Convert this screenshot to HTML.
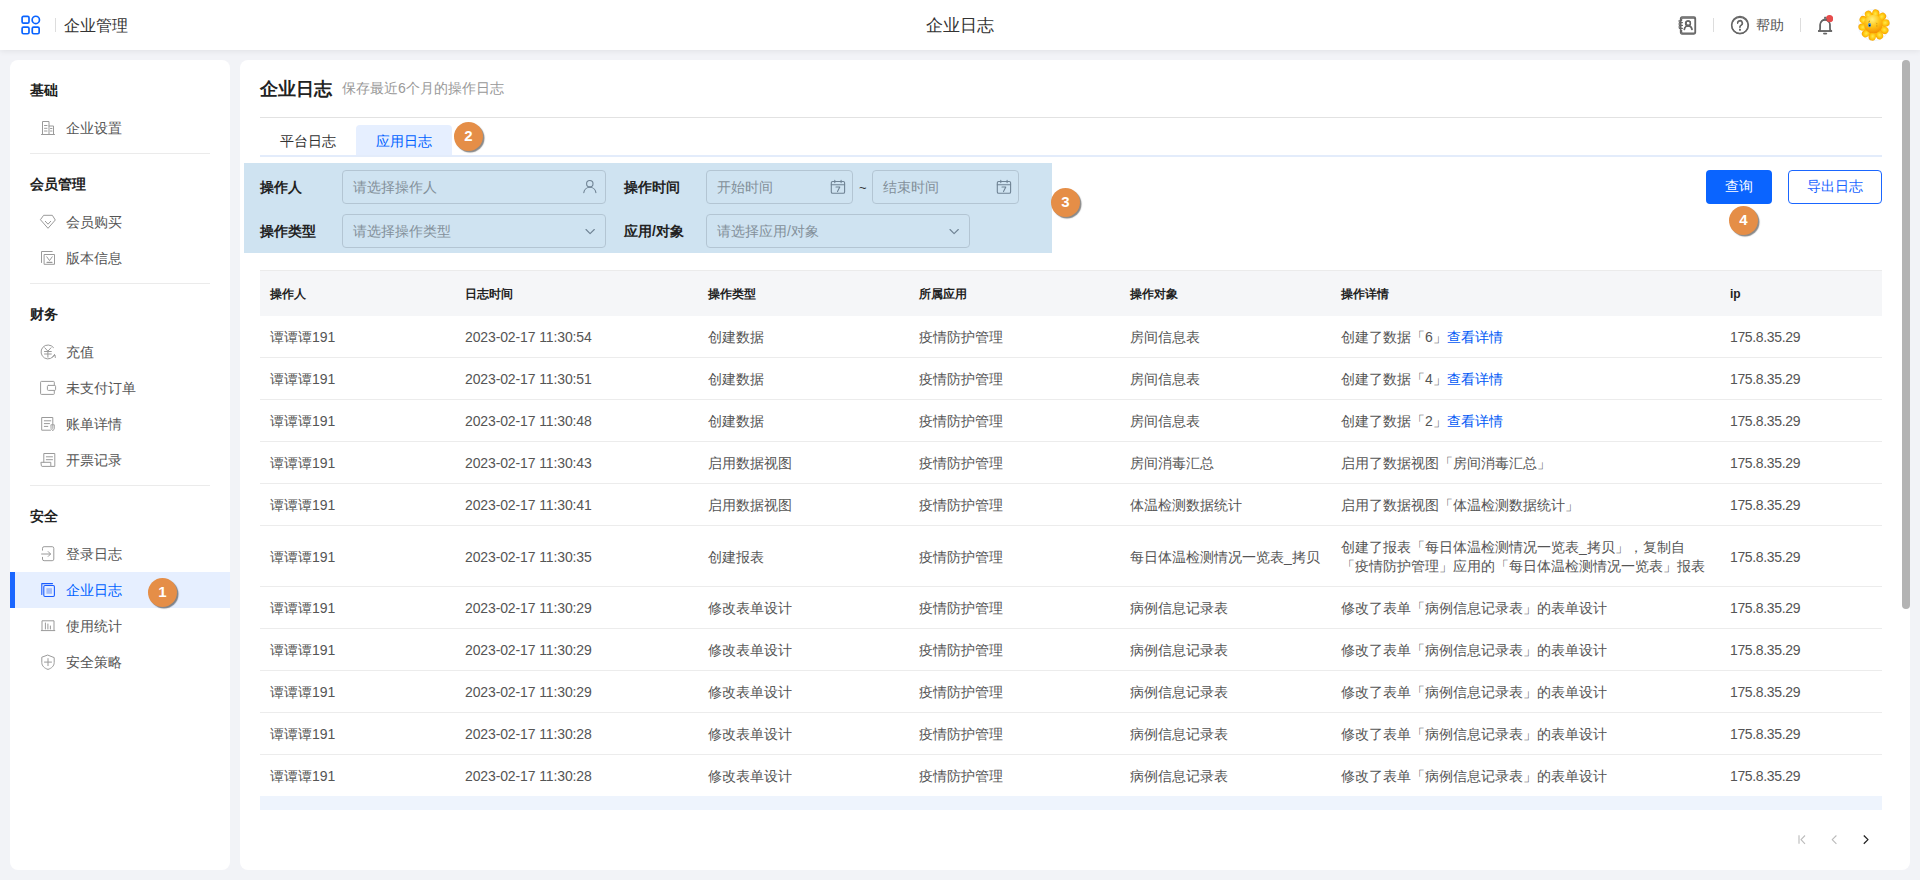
<!DOCTYPE html>
<html><head><meta charset="utf-8">
<style>
*{box-sizing:border-box;margin:0;padding:0}
html,body{width:1920px;height:880px;overflow:hidden;background:#f2f3f7;font-family:"Liberation Sans",sans-serif;color:#333}
.abs{position:absolute}
#hdr{position:absolute;left:0;top:0;width:1920px;height:50px;background:#fff;box-shadow:0 1px 6px rgba(0,0,0,0.08);z-index:2}
#side{position:absolute;left:10px;top:60px;width:220px;height:810px;background:#fff;border-radius:8px}
#main{position:absolute;left:240px;top:60px;width:1670px;height:810px;background:#fff;border-radius:8px;overflow:hidden}
.t{position:absolute;white-space:nowrap;line-height:1}
.grp{position:absolute;left:20px;font-size:14px;font-weight:bold;color:#222;line-height:20px;padding-top:1px}
.item{position:absolute;left:0;width:220px;height:36px;line-height:36px;font-size:14px;color:#555}
.item .lbl{position:absolute;left:56px;top:1px}
.item svg{position:absolute;left:31px;top:11px}
.div{position:absolute;left:20px;width:180px;height:1px;background:#ebebeb}
.badge{position:absolute;width:29px;height:29px;border-radius:50%;background:#e58e47;color:#fff;font-weight:bold;font-size:15px;line-height:28px;text-align:center;box-shadow:1.5px 1.5px 1px rgba(40,40,40,0.55)}
.lab{position:absolute;font-size:14px;font-weight:bold;color:#222;line-height:20px}
.inp{position:absolute;height:34px;border:1px solid #b3c5d3;border-radius:4px;font-size:14px;color:#83909a;line-height:32px;padding-left:10px}
.th{position:absolute;top:0;line-height:48px;font-size:12px;font-weight:bold;color:#222}
.row{position:absolute;left:20px;width:1622px;border-bottom:1px solid #ececec;font-size:14px;color:#555}
.row span{position:absolute;white-space:nowrap;top:0;bottom:0;display:flex;align-items:center;line-height:19px;padding-top:1px}
.row.tall span{padding-top:2px}
a{color:#0058f5;text-decoration:none}
</style></head><body>
<div id="hdr">
  <svg class="abs" style="left:21px;top:15px" width="20" height="20" viewBox="0 0 20 20" fill="none" stroke="#0a64ff" stroke-width="1.7">
    <rect x="1.1" y="1.45" width="6.9" height="6.7" rx="1.4"/><circle cx="14.8" cy="4.9" r="3.65"/><rect x="1.1" y="12.05" width="6.9" height="6.7" rx="1.4"/><rect x="11.25" y="12.05" width="6.9" height="6.7" rx="1.4"/>
  </svg>
  <div class="abs" style="left:55px;top:18px;width:1px;height:14px;background:#ddd"></div>
  <div class="t" style="left:64px;top:18px;font-size:16px;color:#333">企业管理</div>
  <div class="t" style="left:926px;top:17px;font-size:17px;color:#333">企业日志</div>
  <svg class="abs" style="left:1678px;top:16px" width="19" height="19" viewBox="0 0 19 19" fill="none" stroke="#666" stroke-width="1.3">
    <rect x="2.5" y="1" width="15" height="17" rx="1.5"/><circle cx="10" cy="7.5" r="2.5"/><path d="M6 14c0.5-2.5 2-4 4-4s3.5 1.5 4 4"/><path d="M0.5 5h3M0.5 8h3M0.5 11h3"/>
  </svg>
  <div class="abs" style="left:1713px;top:18px;width:1px;height:14px;background:#ddd"></div>
  <svg class="abs" style="left:1730px;top:15px" width="20" height="20" viewBox="0 0 20 20" fill="none" stroke="#666" stroke-width="1.3">
    <circle cx="10" cy="10" r="8.5"/><path d="M7.5 8a2.5 2.5 0 1 1 3.5 2.3c-0.7 0.3-1 0.8-1 1.5v0.7"/><circle cx="10" cy="14.8" r="0.4" fill="#666"/>
  </svg>
  <div class="t" style="left:1756px;top:18px;font-size:14px;color:#555">帮助</div>
  <div class="abs" style="left:1800px;top:18px;width:1px;height:14px;background:#ddd"></div>
  <svg class="abs" style="left:1815px;top:15px" width="20" height="20" viewBox="0 0 20 20" fill="none" stroke="#555" stroke-width="1.3">
    <path d="M3 16h14M5 16v-6a5 5 0 0 1 10 0v6M8.5 18.5h3M10 3v2"/>
  </svg>
  <div class="abs" style="left:1826px;top:15px;width:7px;height:7px;border-radius:50%;background:#e84545"></div>
  <svg class="abs" style="left:1858px;top:9px" width="32" height="32" viewBox="0 0 31 31">
<defs><radialGradient id="pg" cx="50%" cy="45%" r="60%"><stop offset="0" stop-color="#ffe94a"/><stop offset="0.6" stop-color="#ffc20a"/><stop offset="1" stop-color="#f59500"/></radialGradient>
<radialGradient id="fg" cx="45%" cy="25%" r="75%"><stop offset="0" stop-color="#fff07a"/><stop offset="0.5" stop-color="#ffc61a"/><stop offset="1" stop-color="#f39000"/></radialGradient></defs>
<circle cx="15.5" cy="15.5" r="15.2" fill="#fff" stroke="#e6f0fc" stroke-width="0.7"/>
<ellipse cx="17.14" cy="4.62" rx="4.3" ry="3.6" transform="rotate(-81.4 17.14 4.62)" fill="url(#pg)"/><ellipse cx="23.22" cy="7.67" rx="4.3" ry="3.6" transform="rotate(-45.4 23.22 7.67)" fill="url(#pg)"/><ellipse cx="26.35" cy="13.70" rx="4.3" ry="3.6" transform="rotate(-9.4 26.35 13.70)" fill="url(#pg)"/><ellipse cx="25.34" cy="20.42" rx="4.3" ry="3.6" transform="rotate(26.6 25.34 20.42)" fill="url(#pg)"/><ellipse cx="20.56" cy="25.27" rx="4.3" ry="3.6" transform="rotate(62.6 20.56 25.27)" fill="url(#pg)"/><ellipse cx="13.86" cy="26.38" rx="4.3" ry="3.6" transform="rotate(98.6 13.86 26.38)" fill="url(#pg)"/><ellipse cx="7.78" cy="23.33" rx="4.3" ry="3.6" transform="rotate(134.6 7.78 23.33)" fill="url(#pg)"/><ellipse cx="4.65" cy="17.30" rx="4.3" ry="3.6" transform="rotate(170.6 4.65 17.30)" fill="url(#pg)"/><ellipse cx="5.66" cy="10.58" rx="4.3" ry="3.6" transform="rotate(206.6 5.66 10.58)" fill="url(#pg)"/><ellipse cx="10.44" cy="5.73" rx="4.3" ry="3.6" transform="rotate(242.6 10.44 5.73)" fill="url(#pg)"/>
<circle cx="14.8" cy="14.6" r="9" fill="url(#fg)"/>
<ellipse cx="11.2" cy="15.6" rx="1.5" ry="2" fill="#3f8fd6"/><circle cx="11.3" cy="16" r="0.7" fill="#111"/>
<path d="M10.2 12.6l1.3-1" stroke="#553300" stroke-width="0.6"/>
<path d="M17.6 13.4q0.8 0.6 0.6 1.4M17.6 16.4h1.2" stroke="#9a6a10" stroke-width="0.5" fill="none"/>
</svg>
</div>

<div id="side">
  <div class="grp" style="top:19px">基础</div>
  <div class="item" style="top:49px"><span class="lbl">企业设置</span></div>
  <div class="div" style="top:93px"></div>
  <div class="grp" style="top:113px">会员管理</div>
  <div class="item" style="top:143px"><span class="lbl">会员购买</span></div>
  <div class="item" style="top:179px"><span class="lbl">版本信息</span></div>
  <div class="div" style="top:223px"></div>
  <div class="grp" style="top:243px">财务</div>
  <div class="item" style="top:273px"><span class="lbl">充值</span></div>
  <div class="item" style="top:309px"><span class="lbl">未支付订单</span></div>
  <div class="item" style="top:345px"><span class="lbl">账单详情</span></div>
  <div class="item" style="top:381px"><span class="lbl">开票记录</span></div>
  <div class="div" style="top:425px"></div>
  <div class="grp" style="top:445px">安全</div>
  <div class="item" style="top:475px"><span class="lbl">登录日志</span></div>
  <div class="abs" style="left:0;top:512px;width:220px;height:36px;background:#e6efff"></div><div class="abs" style="left:0;top:512px;width:5px;height:36px;background:#1a66ff"></div><div class="item" style="top:511px;color:#0062ff"><span class="lbl">企业日志</span></div>
  <div class="item" style="top:547px"><span class="lbl">使用统计</span></div>
  <div class="item" style="top:583px"><span class="lbl">安全策略</span></div>
</div>
<div class="badge" style="left:148px;top:578px">1</div>

<div id="main">
  <div class="t" style="left:20px;top:20px;font-size:18px;font-weight:bold;color:#222">企业日志</div>
  <div class="t" style="left:102px;top:21px;font-size:14px;color:#999">保存最近6个月的操作日志</div>
  <div class="abs" style="left:20px;top:57px;width:1622px;height:1px;background:#e2e2e2"></div>
  <div class="abs" style="left:116px;top:65px;width:96px;height:31px;background:#e6efff;border-radius:4px 4px 0 0"></div>
  <div class="abs" style="left:20px;top:95px;width:1622px;height:2px;background:#e3ecfb"></div>
  <div class="t" style="left:40px;top:74px;font-size:14px;color:#333">平台日志</div>
  <div class="t" style="left:136px;top:74px;font-size:14px;color:#0062ff">应用日志</div>

  <div class="abs" style="left:4px;top:103px;width:808px;height:90px;background:#cfe3f1"></div>
  <div class="lab" style="left:20px;top:117px">操作人</div>
  <div class="inp" style="left:102px;top:110px;width:264px">请选择操作人</div>
  <div class="lab" style="left:384px;top:117px">操作时间</div>
  <div class="inp" style="left:466px;top:110px;width:147px">开始时间</div>
  <div class="t" style="left:619px;top:121px;font-size:13px;color:#333">~</div>
  <div class="inp" style="left:632px;top:110px;width:147px">结束时间</div>
  <div class="lab" style="left:20px;top:161px">操作类型</div>
  <div class="inp" style="left:102px;top:154px;width:264px">请选择操作类型</div>
  <div class="lab" style="left:384px;top:161px">应用/对象</div>
  <div class="inp" style="left:466px;top:154px;width:264px">请选择应用/对象</div>

  <div class="abs" style="left:1466px;top:110px;width:66px;height:34px;background:#0a64ff;border-radius:4px;color:#fff;font-size:14px;line-height:33px;text-align:center">查询</div>
  <div class="abs" style="left:1548px;top:110px;width:94px;height:34px;border:1px solid #1a66ff;border-radius:4px;color:#1a66ff;font-size:14px;line-height:31px;text-align:center">导出日志</div>

  <div class="abs" style="left:20px;top:210px;width:1622px;height:46px;background:#f5f6f8;border-top:1px solid #ebebeb"></div>
  <div class="th" style="left:30px;top:210px">操作人</div>
  <div class="th" style="left:225px;top:210px">日志时间</div>
  <div class="th" style="left:468px;top:210px">操作类型</div>
  <div class="th" style="left:679px;top:210px">所属应用</div>
  <div class="th" style="left:890px;top:210px">操作对象</div>
  <div class="th" style="left:1101px;top:210px">操作详情</div>
  <div class="th" style="left:1490px;top:210px">ip</div>
  <div id="rows"><div class="row" style="top:256px;height:42px"><span style="left:10px">谭谭谭191</span><span style="left:205px;letter-spacing:-0.12px">2023-02-17 11:30:54</span><span style="left:448px">创建数据</span><span style="left:659px">疫情防护管理</span><span style="left:870px">房间信息表</span><span class="det" style="left:1081px">创建了数据「6」<a>查看详情</a></span><span style="left:1470px;letter-spacing:-0.35px">175.8.35.29</span></div>
<div class="row" style="top:298px;height:42px"><span style="left:10px">谭谭谭191</span><span style="left:205px;letter-spacing:-0.12px">2023-02-17 11:30:51</span><span style="left:448px">创建数据</span><span style="left:659px">疫情防护管理</span><span style="left:870px">房间信息表</span><span class="det" style="left:1081px">创建了数据「4」<a>查看详情</a></span><span style="left:1470px;letter-spacing:-0.35px">175.8.35.29</span></div>
<div class="row" style="top:340px;height:42px"><span style="left:10px">谭谭谭191</span><span style="left:205px;letter-spacing:-0.12px">2023-02-17 11:30:48</span><span style="left:448px">创建数据</span><span style="left:659px">疫情防护管理</span><span style="left:870px">房间信息表</span><span class="det" style="left:1081px">创建了数据「2」<a>查看详情</a></span><span style="left:1470px;letter-spacing:-0.35px">175.8.35.29</span></div>
<div class="row" style="top:382px;height:42px"><span style="left:10px">谭谭谭191</span><span style="left:205px;letter-spacing:-0.12px">2023-02-17 11:30:43</span><span style="left:448px">启用数据视图</span><span style="left:659px">疫情防护管理</span><span style="left:870px">房间消毒汇总</span><span class="det" style="left:1081px">启用了数据视图「房间消毒汇总」</span><span style="left:1470px;letter-spacing:-0.35px">175.8.35.29</span></div>
<div class="row" style="top:424px;height:42px"><span style="left:10px">谭谭谭191</span><span style="left:205px;letter-spacing:-0.12px">2023-02-17 11:30:41</span><span style="left:448px">启用数据视图</span><span style="left:659px">疫情防护管理</span><span style="left:870px">体温检测数据统计</span><span class="det" style="left:1081px">启用了数据视图「体温检测数据统计」</span><span style="left:1470px;letter-spacing:-0.35px">175.8.35.29</span></div>
<div class="row tall" style="top:466px;height:61px"><span style="left:10px">谭谭谭191</span><span style="left:205px;letter-spacing:-0.12px">2023-02-17 11:30:35</span><span style="left:448px">创建报表</span><span style="left:659px">疫情防护管理</span><span style="left:870px">每日体温检测情况一览表_拷贝</span><span class="det" style="left:1081px">创建了报表「每日体温检测情况一览表_拷贝」，复制自<br>「疫情防护管理」应用的「每日体温检测情况一览表」报表</span><span style="left:1470px;letter-spacing:-0.35px">175.8.35.29</span></div>
<div class="row" style="top:527px;height:42px"><span style="left:10px">谭谭谭191</span><span style="left:205px;letter-spacing:-0.12px">2023-02-17 11:30:29</span><span style="left:448px">修改表单设计</span><span style="left:659px">疫情防护管理</span><span style="left:870px">病例信息记录表</span><span class="det" style="left:1081px">修改了表单「病例信息记录表」的表单设计</span><span style="left:1470px;letter-spacing:-0.35px">175.8.35.29</span></div>
<div class="row" style="top:569px;height:42px"><span style="left:10px">谭谭谭191</span><span style="left:205px;letter-spacing:-0.12px">2023-02-17 11:30:29</span><span style="left:448px">修改表单设计</span><span style="left:659px">疫情防护管理</span><span style="left:870px">病例信息记录表</span><span class="det" style="left:1081px">修改了表单「病例信息记录表」的表单设计</span><span style="left:1470px;letter-spacing:-0.35px">175.8.35.29</span></div>
<div class="row" style="top:611px;height:42px"><span style="left:10px">谭谭谭191</span><span style="left:205px;letter-spacing:-0.12px">2023-02-17 11:30:29</span><span style="left:448px">修改表单设计</span><span style="left:659px">疫情防护管理</span><span style="left:870px">病例信息记录表</span><span class="det" style="left:1081px">修改了表单「病例信息记录表」的表单设计</span><span style="left:1470px;letter-spacing:-0.35px">175.8.35.29</span></div>
<div class="row" style="top:653px;height:42px"><span style="left:10px">谭谭谭191</span><span style="left:205px;letter-spacing:-0.12px">2023-02-17 11:30:28</span><span style="left:448px">修改表单设计</span><span style="left:659px">疫情防护管理</span><span style="left:870px">病例信息记录表</span><span class="det" style="left:1081px">修改了表单「病例信息记录表」的表单设计</span><span style="left:1470px;letter-spacing:-0.35px">175.8.35.29</span></div>
<div class="row" style="top:695px;height:42px"><span style="left:10px">谭谭谭191</span><span style="left:205px;letter-spacing:-0.12px">2023-02-17 11:30:28</span><span style="left:448px">修改表单设计</span><span style="left:659px">疫情防护管理</span><span style="left:870px">病例信息记录表</span><span class="det" style="left:1081px">修改了表单「病例信息记录表」的表单设计</span><span style="left:1470px;letter-spacing:-0.35px">175.8.35.29</span></div></div><!--/rows-->
  <div class="abs" style="left:20px;top:736px;width:1622px;height:14px;background:#eef4fd;z-index:1"></div>
  
</div>
<div class="abs" style="left:1902px;top:60px;width:8px;height:549px;background:#b3b3b3;border-radius:4px;z-index:3"></div>
<div class="badge" style="left:454px;top:122px">2</div>
<div class="badge" style="left:1051px;top:188px">3</div>
<div class="badge" style="left:1729px;top:206px">4</div>
<svg id="icons" style="position:absolute;left:0;top:0;z-index:5;pointer-events:none" width="1920" height="880" viewBox="0 0 1920 880" fill="none" stroke-linecap="round" stroke-linejoin="round">
<g stroke="#9a9a9a" stroke-width="1">
 <!-- 企业设置 building -->
 <path d="M42.5 134V121.5H49V134M49 126H53.5V134M41.5 134.5H54.5M44.5 125.5H47M44.5 128.3H47M44.5 131H47M50.5 128.5H52M50.5 131H52"/>
 <!-- 会员购买 gem -->
 <path d="M44 215.3H52.3L55.3 220L48 228.3L40.7 220Z M45.3 221.3L48 224.2L50.7 221.3"/>
 <!-- 版本信息 -->
 <path d="M41.5 262.5V251.5H52.2M44.5 254.5H54.5V264.3H44.5Z M46.8 256.8L49.5 260.6L52.2 256.8"/>
 <path d="M47 262.3H52" stroke-width="1.2"/>
 <!-- 充值 -->
 <path d="M54.6 354.5A7 7 0 1 1 53.5 347.5"/>
 <path d="M44.8 347.8L47.9 351.2L51 347.8M44.5 351.5H51.3M44.5 354H51.3M47.9 351.2V357.2"/>
 <path d="M52.8 356.6L55 355L55.3 357.5"/>
 <!-- 未支付订单 wallet -->
 <path d="M54.3 385.3V382.2A0.8 0.8 0 0 0 53.5 381.4H41.4A0.8 0.8 0 0 0 40.6 382.2V393.6A0.8 0.8 0 0 0 41.4 394.4H53.5A0.8 0.8 0 0 0 54.3 393.6V390.5"/>
 <rect x="47.4" y="385.4" width="8.2" height="5" rx="1"/>
 <!-- 账单详情 -->
 <path d="M52.8 424.5V417.5H41.7V430.2H50.5M44.3 420.8H50.8M44.3 423.6H49.5M44.3 426.4H47.8"/>
 <path d="M51.3 424.8H54.3V428.8L52.8 430.8L51.3 428.8Z M52.8 425V428.5" stroke-width="0.9"/>
 <!-- 开票记录 -->
 <path d="M43.8 462.2V453.5H54.8V466.4H51.2M46.3 456.8H52.5M46.3 459.7H52.5M41.3 462.3H50.8V466.4H42.1A0.8 0.8 0 0 1 41.3 465.6Z"/>
 <!-- 登录日志 -->
 <path d="M42.5 550.2V548.3A1.6 1.6 0 0 1 44.1 546.7H52.2A1.6 1.6 0 0 1 53.8 548.3V559.1A1.6 1.6 0 0 1 52.2 560.7H44.1A1.6 1.6 0 0 1 42.5 559.1V557.3M41.6 554H50.4M48.2 551.6L50.6 554L48.2 556.4"/>
 <!-- 使用统计 -->
 <path d="M42 630.4V620.8H54V630.4M41.3 630.6H54.8M45.4 623V629M47.9 624V629M50.4 626V629"/>
 <!-- 安全策略 -->
 <path d="M48 655.2L54.2 657.6V662.5C54.2 666 51.5 668.3 48 669.4C44.5 668.3 41.8 666 41.8 662.5V657.6Z M44.5 662.1H51.5M48 658.6V665.6"/>
</g>
<!-- 企业日志 active -->
<g stroke="#1a5cff" stroke-width="1.1">
 <path d="M41.8 594.5V583.6H52.5"/>
 <rect x="43.8" y="585.5" width="10.6" height="11" rx="1.2"/>
</g>
<rect x="46.4" y="588.2" width="5.6" height="5.6" fill="#a6bdf7"/>
<!-- header icons -->
<g stroke="#666" stroke-width="1.25">
 <path d="M1681.6 20.6V19.2A1.2 1.2 0 0 1 1682.8 18H1693.8A1.2 1.2 0 0 1 1695 19.2V31.9A1.2 1.2 0 0 1 1693.8 33.1H1682.8A1.2 1.2 0 0 1 1681.6 31.9V30.2"/>
 <path d="M1679.4 22.6H1682.4M1679.4 25.4H1682.4M1679.4 28.3H1682.4"/>
 <circle cx="1688.3" cy="22.9" r="2.15"/>
 <path d="M1684.6 29.6A3.7 4 0 0 1 1692.1 29.6"/>
 <circle cx="1739.9" cy="25.5" r="8.1" stroke-width="1.2"/>
 <path d="M1737.6 23.4A2.3 2.3 0 1 1 1741.1 25.3C1740.3 25.9 1739.9 26.4 1739.9 27.3V27.6" stroke-width="1.2"/>
 <path d="M1739.9 29.6V29.8" stroke-width="1.5"/>
 <path d="M1818.6 31Q1820.4 30.2 1820.4 27.8V24.6A4.75 5.4 0 0 1 1829.9 24.6V27.8Q1829.9 30.2 1831.7 31Z" stroke-linejoin="round"/>
 <path d="M1823.8 33.5H1826.6M1824.6 17.3H1825.7"/>
</g>
<circle cx="1830" cy="19.1" r="3" fill="#e64d4d"/>
<!-- input icons -->
<g stroke="#6f8394" stroke-width="1.1">
 <circle cx="589.8" cy="183.7" r="3.2"/>
 <path d="M583.8 192.6A6.1 6.1 0 0 1 595.9 192.6"/>
 <path d="M586 229.5L590.1 233.7L594.3 229.5"/>
 <path d="M950 229.5L954.1 233.7L958.3 229.5"/>
 <rect x="831.3" y="181.5" width="13.3" height="11.8" rx="1.3"/>
 <path d="M831.3 184.8H844.6M834.8 180.3V182.6M841.1 180.3V182.6M836 187H839.8L837.5 191.6"/>
 <rect x="997.3" y="181.5" width="13.3" height="11.8" rx="1.3"/>
 <path d="M997.3 184.8H1010.6M1000.8 180.3V182.6M1007.1 180.3V182.6M1002 187H1005.8L1003.5 191.6"/>
</g>
<!-- pagination -->
<g stroke="#bbb" stroke-width="1.1" stroke-linecap="butt">
 <path d="M1799 835.3V843.8M1805 835.5L1801 839.6L1805 843.8M1836.4 835.5L1832.2 839.6L1836.4 843.8"/>
</g>
<path d="M1863.8 835.5L1868 839.6L1863.8 843.8" stroke="#222" stroke-width="1.3" stroke-linecap="butt"/>
</svg>
</body></html>
